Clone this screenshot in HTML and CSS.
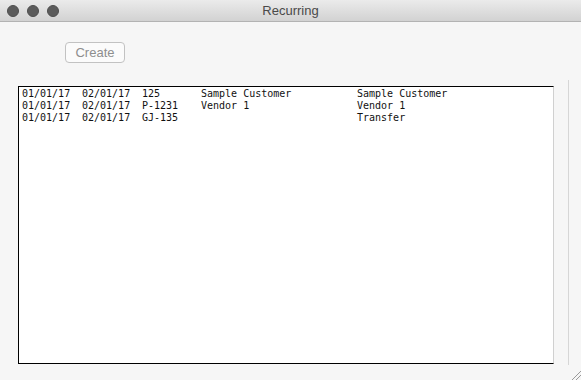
FILE: index.html
```html
<!DOCTYPE html>
<html lang="en">
<head>
    <meta charset="UTF-8">
    <title>Recurring</title>
    <link rel="stylesheet" href="styles.css">
</head>
<body>
    <div class="window">
        <div class="titlebar">
            <div class="lights">
                <span class="light"></span>
                <span class="light"></span>
                <span class="light"></span>
            </div>
            <div class="title">Recurring</div>
            <div></div>
        </div>

        <div class="toolbar">
            <button class="btn" disabled>Create</button>
        </div>

        <div class="pane">
            <div class="list">
                <div class="row">
                    <span>01/01/17</span><span>02/01/17</span><span>125</span><span>Sample Customer</span><span>Sample Customer</span>
                </div>
                <div class="row">
                    <span>01/01/17</span><span>02/01/17</span><span>P-1231</span><span>Vendor 1</span><span>Vendor 1</span>
                </div>
                <div class="row">
                    <span>01/01/17</span><span>02/01/17</span><span>GJ-135</span><span></span><span>Transfer</span>
                </div>
            </div>
            <div class="gutter"></div>
        </div>

        <svg class="grip" width="12" height="12" viewBox="0 0 12 12">
            <line x1="3" y1="12" x2="12" y2="3" stroke="#9a9a9a" stroke-width="1"/>
            <line x1="7" y1="12" x2="12" y2="7" stroke="#9a9a9a" stroke-width="1"/>
        </svg>
    </div>
</body>
</html>
```

FILE: styles.css
```css
body {
    margin: 0;
    padding: 0;
    background-color: #f6f6f6;
    font-family: "Liberation Sans", Arial, sans-serif;
    overflow: hidden;
}

.window {
    position: relative;
    width: 581px;
    height: 380px;
}

.titlebar {
    display: grid;
    grid-template-columns: 1fr auto 1fr;
    align-items: center;
    height: 21px;
    background: linear-gradient(#ebebeb, #d2d2d2);
    border-bottom: 1px solid #b3b3b3;
}

.lights {
    display: flex;
    gap: 8px;
    padding-left: 7px;
}

.light {
    width: 12px;
    height: 12px;
    border-radius: 50%;
    background-color: #5c5c5c;
    box-sizing: border-box;
    border: 1px solid #4f4f4f;
}

.title {
    font-size: 13px;
    color: #4a4a4a;
}

.toolbar {
    padding: 20px 0 0 65px;
}

.btn {
    width: 60px;
    height: 21px;
    padding: 0;
    font-family: "Liberation Sans", Arial, sans-serif;
    font-size: 13px;
    color: #8e8e8e;
    background-color: #fbfbfb;
    border: 1px solid #c2c2c2;
    border-radius: 4px;
}

.pane {
    display: flex;
    align-items: flex-start;
    margin-top: 17px;
}

.list {
    box-sizing: border-box;
    width: 536px;
    height: 278px;
    margin: 6px 0 0 18px;
    padding: 1px 0 0 3px;
    background-color: #fff;
    border: 1px solid #000;
    border-right-color: #d0d0d0;
    font-family: "DejaVu Sans Mono", monospace;
    font-size: 10px;
    color: #111;
}

.row {
    display: grid;
    grid-template-columns: 60px 60px 59px 156px 1fr;
    height: 12px;
    line-height: 12px;
    white-space: pre;
}

.gutter {
    width: 14px;
    height: 285px;
    border-right: 1px solid #d6d6d6;
}

.grip {
    position: absolute;
    right: 0;
    bottom: 0;
}
```
